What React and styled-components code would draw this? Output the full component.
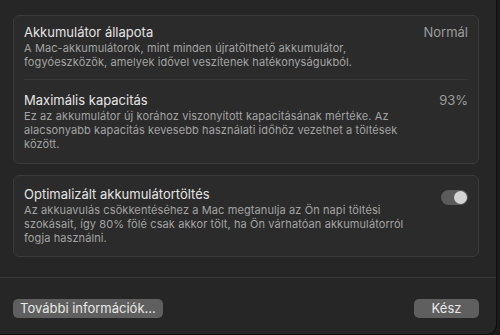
import React from "react";
import styled, {createGlobalStyle} from "styled-components";

const Global = createGlobalStyle`
  html, body {
    margin: 0;
    padding: 0;
    background: #1b1b1b;
  }
  body {
    font-family: Inter, "Noto Sans", "Liberation Sans", sans-serif;
    -webkit-font-smoothing: antialiased;
  }
`;

const Window = styled.div`
  width: 497px;
  height: 335px;
  box-sizing: border-box;
  background: #262626;
  border-right: 1px solid #0f0f0f;
  border-bottom: 1px solid #0f0f0f;
  border-bottom-right-radius: 10px;
  display: flex;
  flex-direction: column;
  overflow: hidden;
`;

const Content = styled.div`
  display: flex;
  flex-direction: column;
  gap: 11px;
  padding: 15px 0 20px 13px;
  width: 466px;
`;

const Card = styled.div`
  background: #2b2b2b;
  border: 1px solid #3a3a3a;
  border-radius: 6px;
  display: flex;
  flex-direction: column;
  padding: 0 10px;
`;

const Row = styled.div`
  display: flex;
  align-items: flex-start;
  gap: 16px;
  padding: ${(p) => p.$pad || "8px 0 10px"};
  & + & {
    border-top: 1px solid #383838;
  }
`;

const Text = styled.div`
  flex: 1;
  min-width: 0;
`;

const Title = styled.div`
  font-size: 13px;
  line-height: 16px;
  color: #e4e4e4;
`;

const Desc = styled.div`
  margin-top: 1px;
  font-size: 11px;
  line-height: 14px;
  letter-spacing: 0.1px;
  color: #a3a3a3;
  max-width: ${(p) => p.$max || "410px"};
`;

const Value = styled.div`
  font-size: 13px;
  line-height: 16px;
  color: #9c9c9c;
`;

const Toggle = styled.div`
  margin-top: 4px;
  width: 27px;
  height: 15px;
  border-radius: 8px;
  background: #5b5b5b;
  display: flex;
  align-items: center;
  justify-content: flex-end;
  padding: 1px;
  box-sizing: border-box;

  &::after {
    content: "";
    width: 13px;
    height: 13px;
    border-radius: 50%;
    background: #d4d4d4;
  }
`;

const Footer = styled.div`
  border-top: 1px solid #383838;
  display: flex;
  justify-content: space-between;
  padding: 21px 17px 0 13px;
`;

const Button = styled.button`
  font-family: inherit;
  font-size: 13px;
  height: 19px;
  min-width: ${(p) => p.$min || "0"};
  padding: 0 7px;
  border: none;
  border-radius: 5px;
  background: #5f5f5f;
  color: #e8e8e8;
  line-height: 19px;
`;

export default function App() {
  return (
    <>
      <Global />
      <Window>
        <Content>
          <Card>
            <Row>
              <Text>
                <Title>Akkumulátor állapota</Title>
                <Desc>
                  A Mac-akkumulátorok, mint minden újratölthető akkumulátor,
                  fogyóeszközök, amelyek idővel veszítenek hatékonyságukból.
                </Desc>
              </Text>
              <Value>Normál</Value>
            </Row>
            <Row $pad="12px 0 12px">
              <Text>
                <Title>Maximális kapacitás</Title>
                <Desc>
                  Ez az akkumulátor új korához viszonyított kapacitásának
                  mértéke. Az alacsonyabb kapacitás kevesebb használati időhöz
                  vezethet a töltések között.
                </Desc>
              </Text>
              <Value>93%</Value>
            </Row>
          </Card>
          <Card>
            <Row $pad="10px 0 11px">
              <Text>
                <Title>Optimalizált akkumulátortöltés</Title>
                <Desc>
                  Az akkuavulás csökkentéséhez a Mac megtanulja az Ön napi
                  töltési szokásait, így 80% fölé csak akkor tölt, ha Ön
                  várhatóan akkumulátorról fogja használni.
                </Desc>
              </Text>
              <Toggle />
            </Row>
          </Card>
        </Content>
        <Footer>
          <Button>További információk...</Button>
          <Button $min="65px">Kész</Button>
        </Footer>
      </Window>
    </>
  );
}
